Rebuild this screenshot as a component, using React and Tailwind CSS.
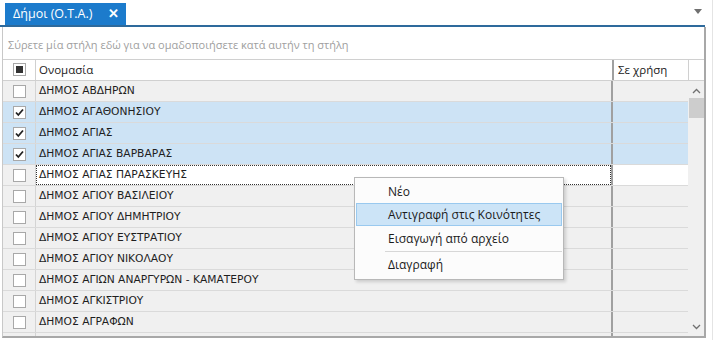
import React from 'react';

const rows = [
  { name: 'ΔΗΜΟΣ ΑΒΔΗΡΩΝ' },
  { name: 'ΔΗΜΟΣ ΑΓΑΘΟΝΗΣΙΟΥ', checked: true },
  { name: 'ΔΗΜΟΣ ΑΓΙΑΣ', checked: true },
  { name: 'ΔΗΜΟΣ ΑΓΙΑΣ ΒΑΡΒΑΡΑΣ', checked: true },
  { name: 'ΔΗΜΟΣ ΑΓΙΑΣ ΠΑΡΑΣΚΕΥΗΣ', focused: true },
  { name: 'ΔΗΜΟΣ ΑΓΙΟΥ ΒΑΣΙΛΕΙΟΥ' },
  { name: 'ΔΗΜΟΣ ΑΓΙΟΥ ΔΗΜΗΤΡΙΟΥ' },
  { name: 'ΔΗΜΟΣ ΑΓΙΟΥ ΕΥΣΤΡΑΤΙΟΥ' },
  { name: 'ΔΗΜΟΣ ΑΓΙΟΥ ΝΙΚΟΛΑΟΥ' },
  { name: 'ΔΗΜΟΣ ΑΓΙΩΝ ΑΝΑΡΓΥΡΩΝ - ΚΑΜΑΤΕΡΟΥ' },
  { name: 'ΔΗΜΟΣ ΑΓΚΙΣΤΡΙΟΥ' },
  { name: 'ΔΗΜΟΣ ΑΓΡΑΦΩΝ' },
  { name: '' },
];

function CheckBox({ checked }) {
  return (
    <div className="w-[13px] h-[13px] border border-[#a8a8a8] bg-white flex items-center justify-center">
      {checked && (
        <svg width="11" height="11" viewBox="0 0 11 11">
          <path d="M2 5.5 L4.3 8 L9 2.5" fill="none" stroke="#222" strokeWidth="1.8" />
        </svg>
      )}
    </div>
  );
}

function Row({ row }) {
  const bg = row.checked ? 'bg-[#cde3f5]' : 'bg-[#f0f0f0]';
  return (
    <div className="flex h-[21px] shrink-0 border-b border-[#dadada]">
      <div className={`w-[33px] shrink-0 flex items-center justify-center border-r border-[#d4d4d4] ${bg}`}>
        <CheckBox checked={row.checked} />
      </div>
      {row.focused ? (
        <div className="flex-1 flex items-center pl-[2px] bg-white border border-dotted border-[#333]">
          {row.name}
        </div>
      ) : (
        <div className={`flex-1 flex items-center pl-[3px] ${bg}`}>{row.name}</div>
      )}
      <div className="w-[2px] shrink-0 bg-[#a0a0a0]" />
      <div className={`w-[75px] shrink-0 ${row.focused ? 'bg-white' : bg}`} />
    </div>
  );
}

export default function App() {
  return (
    <div className="w-[716px] h-[340px] bg-white overflow-hidden relative" style={{ fontFamily: '"Open Sans", "Noto Sans", sans-serif' }}>
      <div className="flex items-end h-[25px] pl-[5px] pr-[14px]">
        <div className="h-[22px] w-[121px] bg-[#1c7bcc] text-white text-[12.5px] flex items-center pl-[8px]">
          <span>Δήμοι (Ο.Τ.Α.)</span>
          <span className="ml-[16px] text-[13px] font-bold">✕</span>
        </div>
        <div className="flex-1" />
        <svg width="8" height="5" viewBox="0 0 8 5" className="mb-[11px]">
          <path d="M0 0 H8 L4 5 Z" fill="#707070" />
        </svg>
      </div>
      <div className="h-[2px] w-[705px] bg-[#2e6a9c]" />
      <div className="ml-[2px] w-[704px] h-[311px] border-l border-[#c8c8c8] border-r-2 border-r-[#a8a8a8] border-b-2 border-b-[#a8a8a8] flex flex-col">
        <div className="h-[33px] shrink-0 flex items-center pl-[5px] pt-[4px] text-[11px] text-[#a0a0a0] border-b border-[#d0d0d0]">
          Σύρετε μία στήλη εδώ για να ομαδοποιήσετε κατά αυτήν τη στήλη
        </div>
        <div className="flex h-[21px] shrink-0 border-b border-[#d0d0d0] text-[11.5px] text-[#222]">
          <div className="w-[33px] shrink-0 flex items-center justify-center pb-[1px] border-r border-[#d0d0d0]">
            <div className="w-[13px] h-[13px] border border-[#a8a8a8] bg-white flex items-center justify-center">
              <div className="w-[7px] h-[7px] bg-[#333]" />
            </div>
          </div>
          <div className="flex-1 flex items-center pl-[3px] pb-[1px]">Ονομασία</div>
          <div className="w-[2px] shrink-0 bg-[#a0a0a0]" />
          <div className="w-[75px] shrink-0 flex items-center pl-[4px] pb-[1px] border-r border-[#d0d0d0]">Σε χρήση</div>
          <div className="w-[15px] shrink-0" />
        </div>
        <div className="flex flex-1 overflow-hidden">
          <div className="flex-1 flex flex-col overflow-hidden text-[#1e1e1e]" style={{ fontFamily: '"DejaVu Sans", "Noto Sans", sans-serif', fontSize: '10.7px' }}>
            {rows.map((r, i) => (
              <Row key={i} row={r} />
            ))}
          </div>
          <div className="w-[16px] shrink-0 bg-[#f0f0f0] flex flex-col items-center">
            <svg width="9" height="6" viewBox="0 0 9 6" className="mt-[7px]">
              <path d="M1 5 L4.5 1.5 L8 5" fill="none" stroke="#707070" strokeWidth="1.3" />
            </svg>
            <div className="w-[15px] h-[20px] bg-[#cdcdcd] mt-[4px]" />
            <div className="flex-1" />
            <svg width="9" height="6" viewBox="0 0 9 6" className="mb-[6px]">
              <path d="M1 1 L4.5 4.5 L8 1" fill="none" stroke="#707070" strokeWidth="1.3" />
            </svg>
          </div>
        </div>
      </div>
      <div className="absolute left-[712px] top-0 w-px h-[340px] bg-[#e4e4e4]" />
      <div className="absolute left-[354px] top-[177px] w-[210px] bg-[#fcfcfc] border border-[#b8b8b8] shadow-[2px_2px_3px_rgba(0,0,0,0.15)] text-[12px] text-[#1a1a1a] py-[2px] px-[1px]">
        <div className="h-[23px] flex items-center pl-[32px]">Νέο</div>
        <div className="h-[23px] flex items-center pl-[31px] bg-[#cce4f7] border border-[#99c9ef]">Αντιγραφή στις Κοινότητες</div>
        <div className="h-[25px] flex items-center pl-[32px]">Εισαγωγή από αρχείο</div>
        <div className="ml-[29px] h-px bg-[#d7d7d7]" />
        <div className="h-[25px] flex items-center pl-[32px]">Διαγραφή</div>
      </div>
    </div>
  );
}
